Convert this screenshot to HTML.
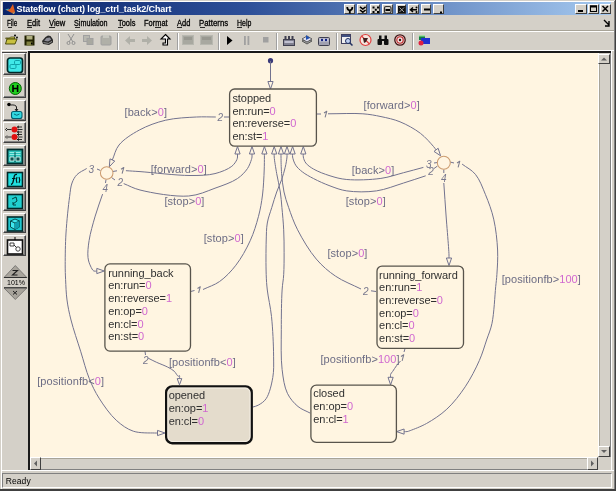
<!DOCTYPE html>
<html><head><meta charset="utf-8">
<style>
*{margin:0;padding:0;box-sizing:border-box}
html,body{width:616px;height:491px;overflow:hidden;background:#D4D0C8;font-family:"Liberation Sans",sans-serif}
.a{position:absolute}
#title{position:absolute;left:3px;top:2px;width:608px;height:13px;background:linear-gradient(to right,#0A246A 0%,#2D4F98 40%,#A6CAF0 100%)}
.tt{position:absolute;left:13.5px;top:0.5px;color:#fff;font-weight:bold;font-size:9px;line-height:13px;white-space:nowrap;letter-spacing:-0.12px}
.tb{position:absolute;top:2px;height:10px;background:#D4D0C8;border-top:1px solid #fff;border-left:1px solid #fff;border-right:1px solid #404040;border-bottom:1px solid #404040}
.menu{position:absolute;top:18px;font-size:9px;line-height:10px;color:#000;white-space:nowrap;transform-origin:0 0;-webkit-text-stroke:0.3px #000}
.vsep{position:absolute;top:33px;width:2px;height:17px;border-left:1px solid #A0A0A0;border-right:1px solid #fff}
#chart{position:absolute;left:30px;top:53px;width:568px;height:404px;background:#FFF5E1}
.pb{position:absolute;left:4px;width:23px;height:21px;background:#D4D0C8;border-top:1px solid #fff;border-left:1px solid #fff;border-right:1px solid #404040;border-bottom:1px solid #404040;box-shadow:inset -1px -1px #808080}
svg{position:absolute;left:0;top:0;overflow:visible}
body{-webkit-font-smoothing:antialiased}
#main{will-change:transform}
.lb{font-family:"Liberation Sans",sans-serif;font-size:11px;fill:#6C6C84;letter-spacing:0.08px}
.st{font-family:"Liberation Sans",sans-serif;font-size:11px;fill:#303030;letter-spacing:-0.06px}
.ix{font-family:"Liberation Sans",sans-serif;font-size:10px;font-style:italic;fill:#78788E}
</style></head><body><div id="wrap" style="position:absolute;left:0;top:0;width:616px;height:491px;will-change:transform">
<!-- window edges -->
<div class="a" style="left:0;top:0;width:616px;height:1px;background:#D4D0C8"></div>
<div class="a" style="left:1px;top:1px;width:614px;height:1px;background:#FFFFFF"></div>
<div class="a" style="left:1px;top:1px;width:1px;height:488px;background:#FFFFFF"></div>
<div class="a" style="left:615px;top:0;width:1px;height:491px;background:#404040"></div>
<div class="a" style="left:614px;top:1px;width:1px;height:489px;background:#808080"></div>
<div class="a" style="left:0;top:489px;width:616px;height:2px;background:#404040"></div>
<!-- title -->
<div id="title">
  <svg width="12" height="13" style="left:1px;top:0"><path d="M2,8 L6,7 L9,2 L11,10 L8,11 Z" fill="#E06020"/><path d="M1,7.5 L5,6.5 L4,8.5Z" fill="#40A0B0"/><path d="M8,11 L11,10 L10,12Z" fill="#F0C060"/></svg>
  <div class="tt">Stateflow (chart) log_ctrl_task2/Chart</div>
</div>
<div class="tb" style="left:344px;top:3.5px;width:10.5px;height:10px"><svg width="9" height="9" style="left:0;top:0"><path d="M2.2,2 Q2.2,5 4.8,5.5 Q7.4,5 7.4,2" stroke="#000" stroke-width="1.7" fill="none"/><path d="M4.8,5 V8.5" stroke="#000" stroke-width="1.8"/></svg></div>
<div class="tb" style="left:356.5px;top:3.5px;width:10.5px;height:10px"><svg width="9" height="9" style="left:0;top:0"><path d="M2,1.8 L4.8,4 L7.6,1.8 M2,5 L4.8,7.2 L7.6,5" stroke="#000" stroke-width="1.5" fill="none"/></svg></div>
<div class="tb" style="left:369.5px;top:3.5px;width:10.5px;height:10px"><svg width="9" height="9" style="left:0;top:0"><path d="M1.5,1.5h2v2h-2z M6,1.5h2v2h-2z M3.8,3.8h2v2h-2z M1.5,6h2v2h-2z M6,6h2v2h-2z" fill="#000"/></svg></div>
<div class="tb" style="left:382.3px;top:3.5px;width:10.5px;height:10px"><svg width="9" height="9" style="left:0;top:0"><rect x="1.5" y="1.5" width="6.5" height="6.5" rx="1.5" fill="none" stroke="#303030" stroke-width="1.2"/><rect x="2.5" y="4" width="4.5" height="2" fill="#000"/></svg></div>
<div class="tb" style="left:395.5px;top:3.5px;width:10.5px;height:10px"><svg width="9" height="9" style="left:0;top:0"><rect x="1" y="1" width="7.5" height="7" fill="#101010"/><path d="M2.5,2.5 L7,7 M7,2.5 L2.5,7" stroke="#B0B0B0" stroke-width="0.9"/></svg></div>
<div class="tb" style="left:408px;top:3.5px;width:10.5px;height:10px"><svg width="9" height="9" style="left:0;top:0"><path d="M1.5,4.8 H8 M4,2.5 L1.5,4.8 L4,7" stroke="#000" stroke-width="1.5" fill="none"/><circle cx="7.5" cy="2.5" r="1" fill="#000"/><circle cx="7.5" cy="7" r="1" fill="#000"/></svg></div>
<div class="tb" style="left:420.7px;top:3.5px;width:10.5px;height:10px"><svg width="9" height="9" style="left:0;top:0"><path d="M2,3.5h6v2h-6z" fill="#000"/></svg></div>
<div class="tb" style="left:433.3px;top:3.5px;width:10.5px;height:10px"><svg width="9" height="9" style="left:0;top:0"><path d="M6,6.5h2v2h-2z" fill="#000"/></svg></div>
<div class="tb" style="left:575px;top:4px;width:12px;height:10px"><svg width="10" height="8" style="left:0;top:0"><rect x="2" y="5" width="5" height="2" fill="#000"/></svg></div>
<div class="tb" style="left:588px;top:4px;width:11px;height:10px"><svg width="9" height="8" style="left:0;top:0"><rect x="1.5" y="1" width="6" height="5.5" fill="none" stroke="#000" stroke-width="1"/><rect x="1" y="0.5" width="7" height="2" fill="#000"/></svg></div>
<div class="tb" style="left:600px;top:4px;width:11px;height:10px"><svg width="9" height="8" style="left:0;top:0"><path d="M1.5,1 L7,6.5 M7,1 L1.5,6.5" stroke="#000" stroke-width="1.5"/></svg></div>
<svg width="12" height="10" style="left:602px;top:19px"><path d="M2,1 L7,6 M7,2 V7 H3" stroke="#000" stroke-width="1.4" fill="none"/></svg>

<!-- menu -->
<div class="menu" style="left:7.3px;transform:scaleX(0.703)">File</div>
<div class="menu" style="left:26.8px;transform:scaleX(0.838)">Edit</div>
<div class="menu" style="left:48.7px;transform:scaleX(0.842)">View</div>
<div class="menu" style="left:74.3px;transform:scaleX(0.799)">Simulation</div>
<div class="menu" style="left:117.6px;transform:scaleX(0.828)">Tools</div>
<div class="menu" style="left:144px;transform:scaleX(0.828)">Format</div>
<div class="menu" style="left:177px;transform:scaleX(0.830)">Add</div>
<div class="menu" style="left:199.3px;transform:scaleX(0.871)">Patterns</div>
<div class="menu" style="left:237px;transform:scaleX(0.772)">Help</div>
<div class="a" style="left:7.5px;top:27px;width:4.5px;height:1px;background:#000;opacity:0.8"></div>
<div class="a" style="left:27px;top:27px;width:5px;height:1px;background:#000;opacity:0.8"></div>
<div class="a" style="left:49px;top:27px;width:5.5px;height:1px;background:#000;opacity:0.8"></div>
<div class="a" style="left:74.5px;top:27px;width:5px;height:1px;background:#000;opacity:0.8"></div>
<div class="a" style="left:118px;top:27px;width:5px;height:1px;background:#000;opacity:0.8"></div>
<div class="a" style="left:154.5px;top:27px;width:6px;height:1px;background:#000;opacity:0.8"></div>
<div class="a" style="left:177px;top:27px;width:5px;height:1px;background:#000;opacity:0.8"></div>
<div class="a" style="left:199.5px;top:27px;width:5px;height:1px;background:#000;opacity:0.8"></div>
<div class="a" style="left:237px;top:27px;width:5px;height:1px;background:#000;opacity:0.8"></div>

<div class="a" style="left:2px;top:30px;width:612px;height:1px;background:#A8A498"></div>
<div class="a" style="left:2px;top:31px;width:612px;height:1px;background:#FFFFFF"></div>
<!-- toolbar -->
<div class="vsep" style="left:58px"></div>
<div class="vsep" style="left:117px"></div>
<div class="vsep" style="left:176.5px"></div>
<div class="vsep" style="left:218px"></div>
<div class="vsep" style="left:276px"></div>
<div class="vsep" style="left:335.5px"></div>
<div class="vsep" style="left:411.5px"></div>
<svg width="13" height="11" style="left:5px;top:34px"><path d="M0.5,4 h4 l1,-1 h4 v2 h-8z" fill="#D8D060" stroke="#404000" stroke-width="0.8"/><path d="M0.5,10 L2,5 H12 L10,10 Z" fill="#C8C040" stroke="#404000" stroke-width="0.9"/><circle cx="10" cy="1.5" r="1" fill="#000"/><circle cx="12" cy="3.5" r="0.9" fill="#000"/></svg>
<svg width="11" height="11" style="left:23.5px;top:34.5px"><rect x="0.5" y="0.5" width="10" height="10" fill="#202000"/><rect x="2.5" y="1" width="6" height="3.5" fill="#B0B080"/><rect x="2.5" y="6.5" width="6" height="4" fill="#808040"/><rect x="7" y="7.5" width="1.5" height="2" fill="#000"/></svg>
<svg width="13" height="12" style="left:40.5px;top:33.5px"><path d="M1,7 L4.5,3 L7,1.5 L9.5,2 L12,5.5 L12,8.5 L8,11 L2,10 Z" fill="#2A2A2A"/><path d="M3.2,6.8 L5.5,4 L8.8,3.6 L10.2,5.8 L7,7.6 Z" fill="#8C8C96"/><path d="M2.5,8.6 L7.5,9.4 L11,7.4" stroke="#A0A0A0" stroke-width="0.9" fill="none"/></svg>
<svg width="10" height="11" style="left:66px;top:34px"><path d="M2,0 L7,8 M8,0 L3,8" stroke="#909090" stroke-width="1"/><circle cx="2.5" cy="9" r="1.5" fill="none" stroke="#909090"/><circle cx="7.5" cy="9" r="1.5" fill="none" stroke="#909090"/></svg>
<svg width="11" height="10" style="left:83px;top:35px"><rect x="0.5" y="0.5" width="6" height="6" fill="#B8B8B0" stroke="#A0A0A0"/><rect x="4" y="3.5" width="6" height="6" fill="#A8A8A0" stroke="#A0A0A0"/></svg>
<svg width="12" height="11" style="left:100px;top:34.5px"><rect x="1" y="1" width="10" height="9" rx="1" fill="#B0B0A8" stroke="#A0A0A0"/><rect x="3" y="0" width="6" height="3" fill="#C8C8C0"/></svg>
<svg width="11" height="9" style="left:124.5px;top:35.5px"><path d="M0,4.5 L5,0 V3 H10 V6 H5 V9 Z" fill="#B0B0A8"/></svg>
<svg width="11" height="9" style="left:141px;top:35.5px"><path d="M11,4.5 L6,0 V3 H1 V6 H6 V9 Z" fill="#B0B0A8"/></svg>
<svg width="11" height="12" style="left:159.5px;top:34px"><path d="M5.5,0.5 L10,5 H7.5 V11 H3 V9 H5.5 V5 H1 Z" fill="#FFFFFF" stroke="#000" stroke-width="1.1"/></svg>
<svg width="12" height="10" style="left:182px;top:35px"><rect x="0.5" y="0.5" width="11" height="9" fill="#A8A8A0" stroke="#B8B8B0"/><rect x="2" y="2" width="8" height="3" fill="#989890"/></svg>
<svg width="13" height="10" style="left:199.5px;top:35px"><rect x="0.5" y="0.5" width="12" height="9" fill="#A8A8A0" stroke="#B8B8B0"/><rect x="2" y="2" width="9" height="3" fill="#989890"/></svg>
<svg width="6" height="9" style="left:226.5px;top:35.5px"><path d="M0,0 L5.5,4.5 L0,9Z" fill="#000"/></svg>
<svg width="6" height="9" style="left:244px;top:35.5px"><rect x="0" y="0" width="1.8" height="9" fill="#A0A0A0"/><rect x="3.5" y="0" width="1.8" height="9" fill="#A0A0A0"/></svg>
<svg width="6" height="6" style="left:262.5px;top:37px"><rect x="0" y="0" width="5.5" height="5.5" fill="#A0A0A0"/></svg>
<svg width="12" height="11" style="left:283px;top:34.5px"><rect x="0.5" y="4.5" width="11" height="6" fill="#808090" stroke="#404050" stroke-width="1"/><rect x="1.5" y="1" width="2" height="4" fill="#404050"/><rect x="5" y="1" width="2" height="4" fill="#404050"/><rect x="8.5" y="1" width="2" height="4" fill="#404050"/><rect x="1.5" y="6" width="9" height="2" fill="#C0C0D0"/></svg>
<svg width="12" height="12" style="left:301px;top:34px"><path d="M1,7 L6,4 L11,7 L6,10Z" fill="#A0A0A0" stroke="#404040" stroke-width="0.8"/><path d="M1,5 L6,2 L11,5 L6,8Z" fill="#E0E0F0" stroke="#404040" stroke-width="0.8"/><path d="M5,1 L9,4 L5,6Z" fill="#2050B0"/></svg>
<svg width="12" height="11" style="left:318px;top:34.5px"><rect x="0.5" y="2.5" width="11" height="8" rx="1" fill="#A0A0B0" stroke="#404050" stroke-width="1"/><rect x="1.5" y="3.5" width="9" height="3" fill="#D0D0E0"/><circle cx="4" cy="5" r="1.2" fill="#102080"/><circle cx="8" cy="5" r="1.2" fill="#102080"/></svg>
<svg width="12" height="12" style="left:340.5px;top:34px"><rect x="0.5" y="0.5" width="9" height="9" fill="#F0F0F0" stroke="#404060" stroke-width="1"/><rect x="1" y="1" width="8" height="2" fill="#405080"/><circle cx="7" cy="7" r="2.5" fill="#C0D0F0" stroke="#203060" stroke-width="1"/><path d="M9,9 L11.5,11.5" stroke="#203060" stroke-width="1.5"/></svg>
<svg width="13" height="12" style="left:358.5px;top:34px"><circle cx="6.5" cy="6" r="5.5" fill="#F4E8E0" stroke="#E04040" stroke-width="1.2"/><path d="M2.5,2 L10.5,10" stroke="#E04040" stroke-width="1.2"/><path d="M4,4 L9,4 L7,8 L5,9 Z" fill="#402020"/></svg>
<svg width="12" height="11" style="left:377px;top:34.5px"><rect x="0.5" y="4" width="4.5" height="6" rx="1" fill="#101010"/><rect x="7" y="4" width="4.5" height="6" rx="1" fill="#101010"/><rect x="2" y="0.5" width="2.5" height="5" fill="#101010"/><rect x="7.5" y="0.5" width="2.5" height="5" fill="#101010"/><rect x="4" y="4" width="4" height="2" fill="#101010"/></svg>
<svg width="12" height="12" style="left:394px;top:34px"><circle cx="6" cy="6" r="5.2" fill="#F0E0E0" stroke="#401010" stroke-width="1.3"/><circle cx="6" cy="6" r="3.2" fill="none" stroke="#C02020" stroke-width="1.1"/><circle cx="6" cy="6" r="1.2" fill="#401010"/></svg>
<svg width="13" height="12" style="left:417.5px;top:34px"><rect x="1" y="1" width="6" height="5" fill="#108040"/><rect x="3" y="4" width="9" height="6" fill="#2030D0"/><circle cx="3" cy="9" r="2.5" fill="#E02040"/><rect x="1" y="1" width="6" height="1.5" fill="#A0E0A0"/></svg>

<!-- chart frame -->
<div class="a" style="left:2px;top:50px;width:612px;height:1px;background:#FFFFFF"></div>
<div class="a" style="left:28px;top:51px;width:584px;height:2px;background:#1A1A1A"></div>
<div class="a" style="left:28px;top:51px;width:2px;height:419px;background:#1A1A1A"></div>
<div id="chart"></div>
<div class="a" style="left:611px;top:51px;width:1px;height:420px;background:#FFFFFF"></div>
<!-- palette -->
<div class="a" style="left:2px;top:52px;width:25px;height:1px;background:#404040"></div>
<div class="pb" style="left:3px;top:53px;height:22px"><svg width="22" height="21" style="left:0;top:0"><rect x="3.5" y="4" width="15" height="14.5" rx="2.5" fill="#40E8E8" stroke="#002828" stroke-width="1.7"/><rect x="6" y="10.5" width="6" height="4" rx="1.2" fill="none" stroke="#10A0A8" stroke-width="1"/><rect x="10.5" y="6.5" width="6" height="4" rx="1.2" fill="none" stroke="#10A0A8" stroke-width="1"/></svg></div>
<div class="pb" style="left:3px;top:76.5px;height:21px"><svg width="22" height="21" style="left:0;top:0"><circle cx="11.3" cy="10.5" r="6" fill="#20D020" stroke="#006000" stroke-width="1"/><path d="M9,7 V14 M13.6,7 V14 M9,10.5 H13.6" stroke="#000" stroke-width="1.6"/></svg></div>
<div class="pb" style="left:3px;top:99.5px;height:21px"><svg width="22" height="21" style="left:0;top:0"><circle cx="5" cy="3.5" r="1.8" fill="#000"/><path d="M6.5,4 Q12,3.5 12.5,6 V9" stroke="#202020" fill="none" stroke-width="1"/><path d="M11,8 L12.5,10 L14,8" stroke="#000" fill="none" stroke-width="0.9"/><rect x="7.5" y="10.5" width="10.5" height="7" rx="2" fill="#30D8E0" stroke="#006070" stroke-width="1.1"/><path d="M10,13 Q12.7,15.5 15.5,13" stroke="#006070" fill="none" stroke-width="0.9"/></svg></div>
<div class="pb" style="left:3px;top:121.5px;height:21.5px"><svg width="22" height="21" style="left:0;top:0"><circle cx="10.5" cy="6.5" r="3" fill="#E01010"/><circle cx="10.5" cy="14" r="3" fill="#E01010"/><path d="M3,6.5 H7.5 M13.5,6.5 H18.5 M13,4 H18 M13,9 H18 M3,14 H7.5 M13.5,14 H18.5 M13,11.5 H18 M13,16.5 H18" stroke="#000" stroke-width="0.8"/><path d="M3,5 L1.5,6.5 L3,8 M3,12.5 L1.5,14 L3,15.5 M15,2.8 L13.5,4 L15,5.2 M15,7.8 L13.5,9 L15,10.2 M15,10.3 L13.5,11.5 L15,12.7 M15,15.3 L13.5,16.5 L15,17.7" stroke="#000" stroke-width="0.8" fill="none"/></svg></div>
<div class="pb" style="left:3px;top:145px;height:21px"><svg width="22" height="21" style="left:0;top:0"><rect x="3.5" y="3.5" width="15" height="14" fill="#28C0B8" stroke="#002E2E" stroke-width="1.8"/><path d="M5.5,6.5 H16.5 M5.5,8.5 H16.5" stroke="#A0F0E8" stroke-width="0.9"/><path d="M11,6 V16" stroke="#004040" stroke-width="0.9"/><path d="M6,11 h4 v4 h-4z M12,11 h4 v4 h-4z" stroke="#E0FFF8" stroke-width="0.8" fill="#105050"/></svg></div>
<div class="pb" style="left:3px;top:168px;height:20.5px"><svg width="22" height="21" style="left:0;top:0"><rect x="3.5" y="3.5" width="15" height="14" fill="#20E0E0" stroke="#002828" stroke-width="1.6"/><path d="M7,15.5 Q9,15 9.5,11 L10.3,7 Q11,5 13,5.5" stroke="#001818" stroke-width="1.3" fill="none"/><path d="M8,9.5 H11.5" stroke="#001818" stroke-width="1"/><path d="M13,8 Q11.6,11 13,14 M15,8 Q16.6,11 15,14" stroke="#001818" stroke-width="1.1" fill="none"/></svg></div>
<div class="pb" style="left:3px;top:190px;height:21px"><svg width="22" height="21" style="left:0;top:0"><rect x="3.5" y="3.5" width="15" height="14" fill="#20D0D0" stroke="#002828" stroke-width="1.6"/><path d="M8,8 L12,6 L13,10 L9,13 M9,11 L9,14 L12,14" stroke="#004040" fill="none" stroke-width="1"/></svg></div>
<div class="pb" style="left:3px;top:213px;height:20px"><svg width="22" height="21" style="left:0;top:0"><rect x="3.5" y="3" width="15" height="14" fill="#20C8D0" stroke="#002828" stroke-width="1.6"/><path d="M6.5,7 L11,5 L15.5,7 V13 L11,15.5 L6.5,13 Z" fill="#40E8F0" stroke="#004040" stroke-width="0.9"/><path d="M6.5,7 L11,9 L15.5,7 M11,9 V15.5" stroke="#004040" fill="none" stroke-width="0.9"/><path d="M11,9 L15.5,7 V13 L11,15.5Z" fill="#10A0B0"/></svg></div>
<div class="pb" style="left:3px;top:235px;height:21px"><svg width="22" height="21" style="left:0;top:0"><rect x="3.5" y="4" width="15" height="14" fill="#FFFFFF" stroke="#101010" stroke-width="1.6"/><path d="M11,1 V4" stroke="#000"/><path d="M6,7 h4 v3 h-4z" fill="none" stroke="#303030" stroke-width="0.9"/><circle cx="14" cy="13" r="2.2" fill="#fff" stroke="#303030" stroke-width="0.9"/><path d="M10,9 L12.5,11.5" stroke="#303030"/></svg></div>
<svg width="26" height="40" style="left:3px;top:262px"><path d="M12.3,3.5 L23.8,15.5 H1 Z" fill="#A8A49C" stroke="#505050" stroke-width="0.6"/><path d="M1,15.5 H23.8" stroke="#303030" stroke-width="1"/><path d="M9.5,8.5 h5 l-5,4.5 h5" stroke="#202020" stroke-width="1.1" fill="none"/><path d="M1,26 H23.8 L12.3,37.5 Z" fill="#A8A49C" stroke="#505050" stroke-width="0.6"/><path d="M1,25.7 H23.8" stroke="#303030" stroke-width="1"/><path d="M10,29 L14,32.5 M14,29 L10,32.5" stroke="#202020" stroke-width="1"/></svg>
<div class="a" style="left:7px;top:278.5px;font-size:8px;line-height:8px;color:#000;transform:scaleX(0.88);transform-origin:0 0">101%</div>

<!-- scrollbars -->
<div class="a" style="left:598px;top:53px;width:13px;height:404px;background:#D4D0C8;border-left:1px solid #FFFFFF;border-right:1px solid #808080"></div>
<div class="a" style="left:599px;top:64px;width:11px;height:382px;border-left:1px solid #A8A498"></div>
<div class="a" style="left:598px;top:54px;width:12px;height:10px;background:#D4D0C8;border-top:1px solid #FFFFFF;border-left:1px solid #FFFFFF;border-right:1px solid #404040;border-bottom:1px solid #404040"><svg width="10" height="8" style="left:0;top:0"><path d="M2,5.5 L5,2.5 L8,5.5Z" fill="#606060"/></svg></div>
<div class="a" style="left:598px;top:446px;width:12px;height:11px;background:#D4D0C8;border-top:1px solid #FFFFFF;border-left:1px solid #FFFFFF;border-right:1px solid #404040;border-bottom:1px solid #404040"><svg width="10" height="9" style="left:0;top:0"><path d="M2,3 L5,6 L8,3Z" fill="#606060"/></svg></div>
<div class="a" style="left:30px;top:457px;width:568px;height:13px;background:#D4D0C8;border-top:1px solid #FFFFFF;border-bottom:1px solid #808080"></div>
<div class="a" style="left:40px;top:458px;width:547px;height:11px;border-top:1px solid #A8A498"></div>
<div class="a" style="left:30px;top:457px;width:11px;height:13px;background:#D4D0C8;border-top:1px solid #FFFFFF;border-left:1px solid #FFFFFF;border-right:1px solid #404040;border-bottom:1px solid #404040"><svg width="9" height="11" style="left:0;top:0"><path d="M6,2.5 L3,5.5 L6,8.5Z" fill="#606060"/></svg></div>
<div class="a" style="left:587px;top:457px;width:11px;height:13px;background:#D4D0C8;border-top:1px solid #FFFFFF;border-left:1px solid #FFFFFF;border-right:1px solid #404040;border-bottom:1px solid #404040"><svg width="9" height="11" style="left:0;top:0"><path d="M3,2.5 L6,5.5 L3,8.5Z" fill="#606060"/></svg></div>

<!-- status -->
<div class="a" style="left:2px;top:470px;width:612px;height:1px;background:#FFFFFF"></div>
<div class="a" style="left:2px;top:473px;width:610px;height:15px;border-top:1px solid #808080;border-left:1px solid #808080;border-right:1px solid #FFFFFF;border-bottom:1px solid #FFFFFF"></div>
<div class="a" style="left:5.7px;top:475.5px;font-size:8.5px;line-height:10px;color:#000;letter-spacing:0.1px">Ready</div>
<svg id="main" width="616" height="491" style="clip-path:inset(53px 18px 34px 30px)">
<circle cx="270.5" cy="60.7" r="2.6" fill="#3A3A7A"/>
<line x1="270.5" y1="61" x2="270.5" y2="82" stroke="#72728E" stroke-width="1"/>
<path d="M270.50,89.00L267.90,81.50L273.10,81.50Z" fill="#FFF5E1" stroke="#72728E" stroke-width="1"/>
<path d="M229.00,117.00L224.00,117.00" fill="none" stroke="#72728E" stroke-width="1"/>
<path d="M215.80,117.00C209.33,117.00 203.59,116.63 196.40,117.00C187.32,117.47 175.40,117.93 165.70,120.20C156.45,122.37 147.34,125.71 139.40,130.00C131.86,134.08 123.56,139.34 119.00,145.00C115.34,149.55 114.57,154.97 112.35,159.95" fill="none" stroke="#72728E" stroke-width="1"/><path d="M109.30,166.80L109.97,158.89L114.72,161.00Z" fill="#FFF5E1" stroke="#72728E" stroke-width="1"/>
<path d="M316.00,114.00L321.00,114.00" fill="none" stroke="#72728E" stroke-width="1"/>
<path d="M328.00,113.80C339.63,113.80 353.18,113.05 362.90,113.80C369.94,114.34 374.93,115.30 381.00,116.60C387.29,117.94 393.71,119.21 400.00,121.80C406.85,124.62 414.59,128.87 420.40,133.30C425.59,137.26 431.00,143.61 433.60,146.60C434.81,147.99 435.24,148.75 436.06,149.83" fill="none" stroke="#72728E" stroke-width="1"/><path d="M440.60,155.80L433.99,151.41L438.13,148.26Z" fill="#FFF5E1" stroke="#72728E" stroke-width="1"/>
<path d="M112.50,171.50L117.00,170.80" fill="none" stroke="#72728E" stroke-width="1"/>
<path d="M125.90,170.70C130.60,171.00 133.86,171.16 140.00,171.60C151.56,172.42 176.19,175.49 190.00,175.50C199.76,175.51 207.63,175.43 215.00,173.60C221.30,172.04 228.04,169.25 231.80,166.30C234.35,164.30 236.06,161.39 236.90,159.60C237.37,158.59 237.40,157.90 237.50,157.00C237.61,156.04 237.50,155.00 237.50,154.00" fill="none" stroke="#72728E" stroke-width="1"/><path d="M237.50,146.50L240.10,154.00L234.90,154.00Z" fill="#FFF5E1" stroke="#72728E" stroke-width="1"/>
<path d="M111.50,177.50L115.00,180.00" fill="none" stroke="#72728E" stroke-width="1"/>
<path d="M123.70,183.60C129.13,185.73 132.97,188.22 140.00,190.00C151.76,192.98 175.05,197.13 188.70,196.00C198.91,195.15 206.67,191.21 215.00,188.20C222.85,185.36 231.67,182.48 237.40,178.60C241.79,175.63 245.11,171.99 247.50,168.50C249.47,165.62 250.70,161.71 251.40,159.60C251.77,158.50 251.90,157.90 252.00,157.00C252.11,156.04 252.00,155.00 252.00,154.00" fill="none" stroke="#72728E" stroke-width="1"/><path d="M252.00,146.50L254.60,154.00L249.40,154.00Z" fill="#FFF5E1" stroke="#72728E" stroke-width="1"/>
<path d="M100.50,170.50L97.00,169.00" fill="none" stroke="#72728E" stroke-width="1"/>
<path d="M86.70,168.50C83.47,170.53 79.49,172.05 77.00,174.60C74.70,176.96 73.21,179.74 72.00,183.00C70.56,186.88 70.38,190.95 69.60,196.60C68.34,205.79 66.73,221.25 66.00,233.00C65.32,243.97 65.19,256.28 65.20,264.90C65.21,270.77 65.34,274.38 65.60,279.70C65.90,285.94 66.10,293.29 67.00,300.00C67.90,306.72 69.13,312.62 71.00,320.00C73.39,329.43 77.63,341.65 80.80,351.80C83.72,361.15 86.00,370.57 89.30,378.70C92.20,385.85 95.00,391.70 99.10,398.20C103.73,405.54 109.98,414.51 116.20,420.20C121.52,425.06 127.00,429.06 133.30,431.20C139.74,433.39 150.63,432.84 154.50,433.00C155.95,433.06 156.50,433.00 157.50,433.00" fill="none" stroke="#72728E" stroke-width="1"/><path d="M165.00,433.00L157.50,435.60L157.50,430.40Z" fill="#FFF5E1" stroke="#72728E" stroke-width="1"/>
<path d="M106.00,179.50L105.50,183.00" fill="none" stroke="#72728E" stroke-width="1"/>
<path d="M102.60,194.10C100.13,201.43 97.42,208.53 95.20,216.10C92.89,223.98 90.26,233.04 89.10,240.50C88.14,246.66 87.47,252.94 88.00,257.60C88.38,260.93 89.39,263.63 90.50,266.00C91.41,267.96 92.52,270.31 93.80,271.00C94.71,271.49 95.80,271.00 96.80,271.00" fill="none" stroke="#72728E" stroke-width="1"/><path d="M104.30,271.00L96.80,273.60L96.80,268.40Z" fill="#FFF5E1" stroke="#72728E" stroke-width="1"/>
<path d="M190.60,291.50L194.50,290.50" fill="none" stroke="#72728E" stroke-width="1"/>
<path d="M203.00,289.50C208.53,286.83 214.39,285.20 219.60,281.50C225.43,277.36 231.01,271.55 235.90,265.20C241.33,258.16 246.39,249.05 250.20,240.70C253.83,232.74 256.42,224.23 258.50,216.30C260.41,209.03 261.56,202.41 262.50,195.00C263.52,187.03 263.91,176.99 264.20,170.00C264.41,164.97 264.38,159.81 264.40,157.00C264.41,155.65 264.40,155.00 264.40,154.00" fill="none" stroke="#72728E" stroke-width="1"/><path d="M264.40,146.50L267.00,154.00L261.80,154.00Z" fill="#FFF5E1" stroke="#72728E" stroke-width="1"/>
<path d="M145.00,351.30L145.50,355.00" fill="none" stroke="#72728E" stroke-width="1"/>
<path d="M148.10,358.10C150.83,359.47 153.32,360.82 156.30,362.20C159.77,363.81 164.49,365.41 167.70,367.10C170.23,368.43 172.39,369.59 174.20,371.20C175.87,372.69 177.27,376.11 178.30,376.30C178.77,376.39 179.26,375.46 179.50,375.60C179.85,375.80 179.50,377.60 179.50,378.60" fill="none" stroke="#72728E" stroke-width="1"/><path d="M179.50,384.80L177.20,378.60L181.80,378.60Z" fill="#FFF5E1" stroke="#72728E" stroke-width="1"/>
<path d="M253.00,407.00C254.73,406.40 256.38,406.22 258.20,405.20C260.70,403.80 264.01,401.87 266.20,398.60C269.41,393.82 271.57,384.55 272.80,377.40C274.00,370.41 273.66,364.36 273.60,356.20C273.52,345.02 272.75,328.37 271.50,316.50C270.47,306.75 268.18,297.64 267.30,290.00C266.64,284.22 266.42,280.80 266.20,274.70C265.88,265.66 265.91,250.48 266.20,241.00C266.41,234.06 266.31,228.73 267.30,223.00C268.24,217.56 270.23,212.57 271.80,207.40C273.37,202.24 274.98,196.82 276.70,192.00C278.26,187.64 280.18,183.83 281.60,179.70C283.00,175.63 284.28,171.35 285.20,167.40C286.03,163.81 286.79,159.43 287.00,157.00C287.11,155.71 287.00,155.00 287.00,154.00" fill="none" stroke="#72728E" stroke-width="1"/><path d="M287.00,146.50L289.60,154.00L284.40,154.00Z" fill="#FFF5E1" stroke="#72728E" stroke-width="1"/>
<path d="M310.20,413.10C306.13,410.90 301.65,409.55 298.00,406.50C293.96,403.13 290.00,398.71 287.40,393.30C284.28,386.79 283.18,378.43 282.10,369.40C280.72,357.90 281.30,342.93 281.30,329.70C281.30,316.47 281.47,300.13 282.10,290.00C282.49,283.70 283.36,280.29 283.70,274.70C284.11,267.95 284.10,259.77 284.10,252.30C284.10,244.81 284.07,237.29 283.70,229.80C283.33,222.32 282.52,214.17 281.90,207.40C281.38,201.78 281.10,197.34 280.30,192.00C279.42,186.12 277.74,179.59 276.70,173.60C275.72,167.94 274.45,160.31 274.20,157.00C274.10,155.60 274.20,155.00 274.20,154.00" fill="none" stroke="#72728E" stroke-width="1"/><path d="M274.20,146.50L276.80,154.00L271.60,154.00Z" fill="#FFF5E1" stroke="#72728E" stroke-width="1"/>
<path d="M376.00,291.50L371.00,290.80" fill="none" stroke="#72728E" stroke-width="1"/>
<path d="M361.00,289.00C352.53,284.73 343.19,281.35 335.60,276.20C328.37,271.30 322.24,266.05 316.30,259.10C309.40,251.03 302.40,239.13 297.60,229.80C293.60,222.03 290.98,214.22 288.60,207.40C286.66,201.84 285.15,197.41 284.00,192.00C282.76,186.19 282.10,179.59 281.60,173.60C281.13,167.94 281.06,160.30 281.00,157.00C280.97,155.60 281.00,155.00 281.00,154.00" fill="none" stroke="#72728E" stroke-width="1"/><path d="M281.00,146.50L283.60,154.00L278.40,154.00Z" fill="#FFF5E1" stroke="#72728E" stroke-width="1"/>
<path d="M437.50,166.00L434.00,168.50" fill="none" stroke="#72728E" stroke-width="1"/>
<path d="M425.70,175.80C418.33,178.20 411.37,180.61 403.60,183.00C395.02,185.64 385.76,189.57 376.40,190.90C366.84,192.26 355.20,192.12 346.80,190.90C340.33,189.96 335.50,187.93 330.00,185.90C324.43,183.84 318.48,181.13 313.60,178.60C309.44,176.44 305.53,174.34 302.40,171.90C299.73,169.82 297.34,167.74 295.70,165.20C294.12,162.75 292.98,159.09 292.60,157.00C292.38,155.78 292.60,155.00 292.60,154.00" fill="none" stroke="#72728E" stroke-width="1"/><path d="M292.60,146.50L295.20,154.00L290.00,154.00Z" fill="#FFF5E1" stroke="#72728E" stroke-width="1"/>
<path d="M437.50,162.50L434.00,163.00" fill="none" stroke="#72728E" stroke-width="1"/>
<path d="M423.40,167.40C416.80,169.17 410.43,170.93 403.60,172.70C396.30,174.59 389.30,177.22 380.90,178.40C370.75,179.82 356.13,180.36 346.80,179.50C340.17,178.89 335.49,177.51 330.00,175.80C324.42,174.06 317.93,171.61 313.60,169.10C310.36,167.22 307.53,165.27 305.80,163.00C304.40,161.16 303.64,158.69 303.30,157.00C303.07,155.85 303.30,155.00 303.30,154.00" fill="none" stroke="#72728E" stroke-width="1"/><path d="M303.30,146.50L305.90,154.00L300.70,154.00Z" fill="#FFF5E1" stroke="#72728E" stroke-width="1"/>
<path d="M450.00,162.00L454.00,163.00" fill="none" stroke="#72728E" stroke-width="1"/>
<path d="M462.10,164.10C466.53,167.50 471.68,169.78 475.40,174.30C479.74,179.57 482.52,187.49 485.50,194.70C488.67,202.37 491.71,210.38 493.70,219.10C495.89,228.69 497.13,240.29 497.60,250.00C498.02,258.60 497.33,267.65 496.90,274.40C496.60,279.20 496.22,281.51 495.70,286.70C494.81,295.65 494.05,313.55 492.00,323.30C490.59,330.04 488.57,334.17 486.60,340.00C484.41,346.47 482.54,353.29 479.40,360.40C475.70,368.77 470.69,378.61 465.20,386.80C459.80,394.86 453.55,402.94 446.80,409.20C440.56,415.00 433.08,419.80 426.50,423.50C420.93,426.63 413.52,429.35 410.20,430.60C408.78,431.14 408.14,431.44 407.10,431.60C406.10,431.76 405.10,431.60 404.10,431.60" fill="none" stroke="#72728E" stroke-width="1"/><path d="M396.60,431.60L404.10,429.00L404.10,434.20Z" fill="#FFF5E1" stroke="#72728E" stroke-width="1"/>
<path d="M443.80,169.50L443.80,173.00" fill="none" stroke="#72728E" stroke-width="1"/>
<path d="M443.80,183.00C444.57,194.00 445.30,205.21 446.10,216.00C446.87,226.39 448.02,239.58 448.50,246.60C448.75,250.27 448.94,252.90 449.00,255.00C449.04,256.25 449.00,257.00 449.00,258.00" fill="none" stroke="#72728E" stroke-width="1"/><path d="M449.00,265.50L446.40,258.00L451.60,258.00Z" fill="#FFF5E1" stroke="#72728E" stroke-width="1"/>
<path d="M405.00,348.70L404.00,352.00" fill="none" stroke="#72728E" stroke-width="1"/>
<path d="M400.50,361.00C399.27,362.43 398.03,363.70 396.80,365.30C395.39,367.14 393.75,369.84 392.60,371.50C391.82,372.62 390.92,373.30 390.60,374.30C390.30,375.24 390.60,376.30 390.60,377.30" fill="none" stroke="#72728E" stroke-width="1"/><path d="M390.60,384.80L388.00,377.30L393.20,377.30Z" fill="#FFF5E1" stroke="#72728E" stroke-width="1"/>
<circle cx="106.7" cy="173" r="6.3" fill="#FFF5E1" stroke="#CC9C70" stroke-width="1.05"/>
<circle cx="443.8" cy="162.8" r="6.5" fill="#FFF5E1" stroke="#CC9C70" stroke-width="1.05"/>
<rect x="229.6" y="89" width="86.80" height="57.20" rx="5" ry="5" fill="#FFF5E1" stroke="#58544C" stroke-width="1.3"/><text x="232.4" y="101.90" class="st">stopped</text><text x="232.4" y="114.60" class="st">en:run=<tspan fill="#D068D0">0</tspan></text><text x="232.4" y="127.30" class="st">en:reverse=<tspan fill="#D068D0">0</tspan></text><text x="232.4" y="140.00" class="st">en:st=<tspan fill="#D068D0">1</tspan></text>
<rect x="104.9" y="263.9" width="85.60" height="87.20" rx="5" ry="5" fill="#FFF5E1" stroke="#58544C" stroke-width="1.3"/><text x="108.2" y="276.70" class="st">running_back</text><text x="108.2" y="289.40" class="st">en:run=<tspan fill="#D068D0">0</tspan></text><text x="108.2" y="302.10" class="st">en:reverse=<tspan fill="#D068D0">1</tspan></text><text x="108.2" y="314.80" class="st">en:op=<tspan fill="#D068D0">0</tspan></text><text x="108.2" y="327.50" class="st">en:cl=<tspan fill="#D068D0">0</tspan></text><text x="108.2" y="340.20" class="st">en:st=<tspan fill="#D068D0">0</tspan></text>
<rect x="377" y="266.1" width="86.50" height="82.20" rx="5" ry="5" fill="#FFF5E1" stroke="#58544C" stroke-width="1.3"/><text x="379.1" y="278.50" class="st">running_forward</text><text x="379.1" y="291.20" class="st">en:run=<tspan fill="#D068D0">1</tspan></text><text x="379.1" y="303.90" class="st">en:reverse=<tspan fill="#D068D0">0</tspan></text><text x="379.1" y="316.60" class="st">en:op=<tspan fill="#D068D0">0</tspan></text><text x="379.1" y="329.30" class="st">en:cl=<tspan fill="#D068D0">0</tspan></text><text x="379.1" y="342.00" class="st">en:st=<tspan fill="#D068D0">0</tspan></text>
<rect x="166.2" y="386.4" width="85.50" height="56.80" rx="6" ry="6" fill="#E4DCCC" stroke="#111111" stroke-width="2.4"/><rect x="167.89999999999998" y="388.09999999999997" width="82.10" height="53.40" rx="5" ry="5" fill="none" stroke="#F4EEE4" stroke-width="1"/><text x="168.7" y="399.10" class="st">opened</text><text x="168.7" y="411.80" class="st">en:op=<tspan fill="#D068D0">1</tspan></text><text x="168.7" y="424.50" class="st">en:cl=<tspan fill="#D068D0">0</tspan></text>
<rect x="310.9" y="385.2" width="85.50" height="57.10" rx="5.5" ry="5.5" fill="#FFF5E1" stroke="#58544C" stroke-width="1.3"/><text x="313.3" y="397.20" class="st">closed</text><text x="313.3" y="409.90" class="st">en:op=<tspan fill="#D068D0">0</tspan></text><text x="313.3" y="422.60" class="st">en:cl=<tspan fill="#D068D0">1</tspan></text>
<text x="124.5" y="116.0" class="lb">[back&gt;<tspan fill="#D068D0">0</tspan>]</text>
<text x="363.6" y="109.2" class="lb">[forward&gt;<tspan fill="#D068D0">0</tspan>]</text>
<text x="150.7" y="172.7" class="lb">[forward&gt;<tspan fill="#D068D0">0</tspan>]</text>
<text x="164.4" y="204.9" class="lb">[stop&gt;<tspan fill="#D068D0">0</tspan>]</text>
<text x="351.8" y="174.1" class="lb">[back&gt;<tspan fill="#D068D0">0</tspan>]</text>
<text x="345.7" y="204.7" class="lb">[stop&gt;<tspan fill="#D068D0">0</tspan>]</text>
<text x="203.7" y="242.0" class="lb">[stop&gt;<tspan fill="#D068D0">0</tspan>]</text>
<text x="327.4" y="257.2" class="lb">[stop&gt;<tspan fill="#D068D0">0</tspan>]</text>
<text x="37.2" y="384.8" class="lb">[positionfb&lt;<tspan fill="#D068D0">0</tspan>]</text>
<text x="168.9" y="365.6" class="lb">[positionfb&lt;<tspan fill="#D068D0">0</tspan>]</text>
<text x="320.4" y="363.4" class="lb">[positionfb&gt;<tspan fill="#D068D0">100</tspan>]</text>
<text x="501.7" y="282.9" class="lb">[positionfb&gt;<tspan fill="#D068D0">100</tspan>]</text>
<text x="217.5" y="120.6" class="ix">2</text>
<path d="M325.10,117.30L326.80,111.20L324.00,113.00" fill="none" stroke="#7A7A8C" stroke-width="1.05" stroke-linejoin="round"/>
<path d="M122.10,173.60L123.80,167.50L121.00,169.30" fill="none" stroke="#7A7A8C" stroke-width="1.05" stroke-linejoin="round"/>
<text x="117.5" y="186" class="ix">2</text>
<text x="88.5" y="173" class="ix">3</text>
<text x="102.5" y="192" class="ix">4</text>
<path d="M198.60,292.80L200.30,286.70L197.50,288.50" fill="none" stroke="#7A7A8C" stroke-width="1.05" stroke-linejoin="round"/>
<text x="143" y="363.5" class="ix">2</text>
<text x="363" y="294.5" class="ix">2</text>
<path d="M402.10,360.80L403.80,354.70L401.00,356.50" fill="none" stroke="#7A7A8C" stroke-width="1.05" stroke-linejoin="round"/>
<path d="M458.10,167.30L459.80,161.20L457.00,163.00" fill="none" stroke="#7A7A8C" stroke-width="1.05" stroke-linejoin="round"/>
<text x="426" y="167.5" class="ix">3</text>
<text x="428.3" y="175.2" class="ix">2</text>
<text x="441" y="182" class="ix">4</text>
</svg>
</div></body></html>
